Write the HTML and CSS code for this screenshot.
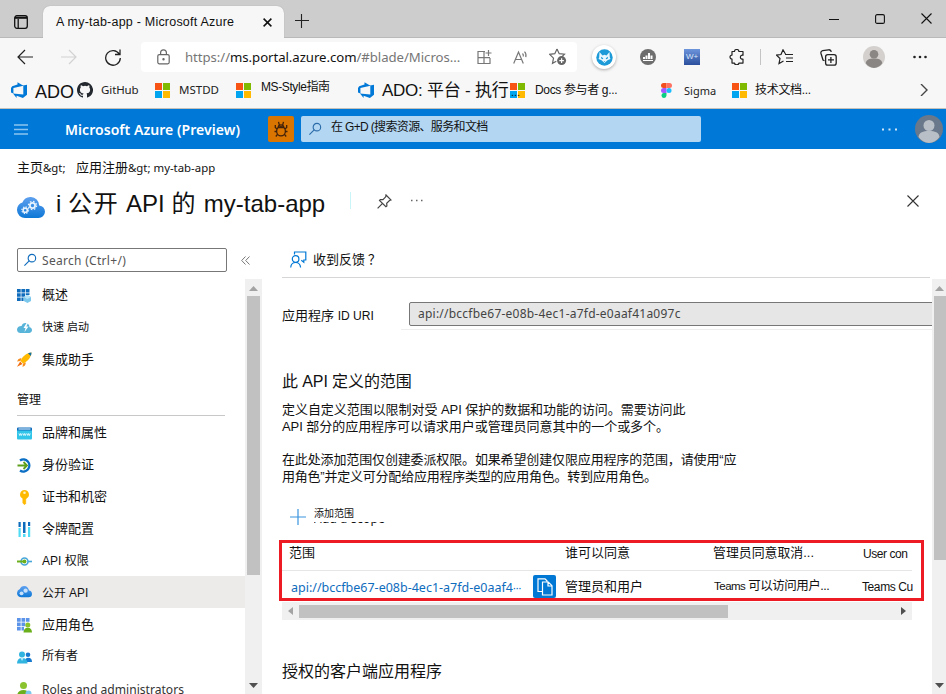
FILE: index.html
```html
<!DOCTYPE html>
<html lang="zh-CN">
<head>
<meta charset="utf-8">
<title>my-tab-app - Microsoft Azure</title>
<link rel="stylesheet" href="styles.css">
</head>
<body>
<svg class="defs" width="0" height="0" aria-hidden="true">
  <defs>
    <linearGradient id="cloudGrad" x1="0" y1="0" x2="0" y2="1"><stop offset="0" stop-color="#5ea0ef"/><stop offset="1" stop-color="#0d78d6"/></linearGradient>
    <symbol id="ms" viewBox="0 0 15 15"><path fill="#f65314" d="M0 0h7v7H0z"/><path fill="#7fba00" d="M8 0h7v7H8z"/><path fill="#00a4ef" d="M0 8h7v7H0z"/><path fill="#ffb900" d="M8 8h7v7H8z"/></symbol>
    <symbol id="ado" viewBox="0 0 16 16"><path fill="#0078d7" d="M16 2.8v10l-4.1 3.2-6.3-2.2V16L2 11.6l10.300.8V3.600zM12.400 3.700 6.500.2v2.400L1.200 4.200 0 5.900v4.500L2.400 11.400V6z"/></symbol>
    <symbol id="person" viewBox="0 0 28 28"><circle cx="14" cy="10.500" r="5.500"/><path d="M3.500 22C4 17.500 8 16 14 16s10 1.500 10.500 6A14 14 0 0 1 14 28 14 14 0 0 1 3.500 22z"/></symbol>
    <symbol id="cloud" viewBox="0 0 28 22"><path fill="url(#cloudGrad)" d="M28 14.800a6.700 6.700 0 0 0-5.800-6.400A8.400 8.400 0 0 0 13.600 0a8.600 8.600 0 0 0-8.200 5.600A7.900 7.900 0 0 0 0 13.300 8.100 8.100 0 0 0 8.400 21h13a6.500 6.500 0 0 0 6.600-6.200z"/></symbol>
    <symbol id="search" viewBox="0 0 16 16"><circle cx="9.500" cy="5.500" r="4" fill="none" stroke="currentColor" stroke-width="1.200"/><path d="M6.600 8.400 1.500 13.500" stroke="currentColor" stroke-width="1.200"/></symbol>
  </defs>
</svg>

<header class="browser">
  <div class="titlebar">
    <svg class="tabs-icon" width="14" height="14" viewBox="0 0 14 14" fill="none" stroke="#111" stroke-width="1.300"><rect x=".7" y=".7" width="12.600" height="12.600" rx="2.200"/><path d="M4.200 4v9" /><path d="M1 2.700h12" stroke-width="2.200"/></svg>
    <div class="tab">
      <span class="tab-title">A my-tab-app - Microsoft Azure</span>
      <svg width="9" height="9" viewBox="0 0 9 9" stroke="#111" stroke-width="1.500"><path d="m.6.6 7.800 7.800M8.400.6.6 8.400"/></svg>
    </div>
    <svg class="newtab" width="14" height="14" viewBox="0 0 14 14" stroke="#222" stroke-width="1.100"><path d="M0 6.500h14M6.500 0v14"/></svg>
    <svg class="win-min" width="10" height="10" viewBox="0 0 10 10" stroke="#111"><path d="M0 5.500h10"/></svg>
    <svg class="win-max" width="10" height="10" viewBox="0 0 10 10" fill="none" stroke="#111" stroke-width="1.100"><rect x=".6" y=".6" width="8.800" height="8.800" rx="1.500"/></svg>
    <svg class="win-close" width="11" height="11" viewBox="0 0 11 11" stroke="#111" stroke-width="1.100"><path d="m.5.5 10 10M10.500.5l-10 10"/></svg>
  </div>

  <div class="toolbar">
    <svg width="17" height="16" viewBox="0 0 17 16" fill="none" stroke="#222" stroke-width="1.200"><path d="M16 8H1M8 1 1 8l7 7"/></svg>
    <svg width="17" height="16" viewBox="0 0 17 16" fill="none" stroke="#d2d2d2" stroke-width="1.200"><path d="M0 8h15M8 1l7 7-7 7"/></svg>
    <svg width="16" height="17" viewBox="0 0 16 17" fill="none" stroke="#222" stroke-width="1.300"><path d="M14.300 5.200A7.300 7.300 0 1 0 15.300 9M15 .5v5h-5"/></svg>
    <div class="address">
      <svg class="lock" width="13" height="16" viewBox="0 0 13 16" fill="none" stroke="#666" stroke-width="1.200"><rect x=".8" y="5.600" width="11.400" height="9.200" rx="1.500"/><path d="M3.600 5.500V3.700a2.900 2.900 0 0 1 5.800 0v1.800"/><circle cx="6.500" cy="10.200" r=".6" fill="#666"/></svg>
      <span class="url">https://<b>ms.portal.azure.com</b>/#blade/Micros...</span>
      <svg width="15" height="15" viewBox="0 0 15 15" fill="none" stroke="#777" stroke-width="1.200"><path d="M8 1.500H1v12h12V8M1 7.700h12M7 1.500v12M11.500 0v6M8.500 3h6"/></svg>
      <svg width="16" height="15" viewBox="0 0 16 15" fill="none" stroke="#777" stroke-width="1.200"><path d="M.7 13.500 5.500 2l4.800 11.500M2.500 9.500h6M9.500 3.500c.8.800 1 1.800.8 3M11.500 1.700c1.500 1.500 1.800 3.400 1.300 5.500"/></svg>
      <svg width="18" height="18" viewBox="0 0 18 18"><path d="m8 1 2.200 4.700 5.300.5-3 3M8 1 5.800 5.700.7 6.300l3.800 3.800-1 5.200 3.800-2" fill="none" stroke="#666" stroke-width="1.200"/><circle cx="12.600" cy="12.600" r="4.500" fill="#666"/><path d="M10.300 12.600h4.600M12.600 10.300v4.600" stroke="#fff" stroke-width="1.200"/></svg>
    </div>
    <span class="fox"><svg width="17" height="17" viewBox="0 0 17 17"><circle cx="8.500" cy="8.500" r="8.200" fill="#1d9bd8"/><path fill="#e8f6fd" d="m3.500 3 3 3.400 2-.6 2 .6 3-3.400.3 5.500 .7 1.500-3 1.200-3 2.800-3-2.800-3-1.200.7-1.500z"/><path fill="#1d9bd8" d="m5 7.800 2.300 1.500-.6 1-1.500-.8zM12 7.800 9.700 9.300l.6 1 1.500-.8zM7.700 12h1.600l-.8.900z"/></svg></span>
    <svg class="badge-icon" width="16" height="16" viewBox="0 0 16 16"><circle cx="8" cy="8" r="8" fill="#6e6e6e"/><path fill="#fff" d="M3 8h2v2H3zM5.500 6.500h2V10h-2zM8 4h2v6H8zM10.500 6.500h2V10h-2zM3 11h10v1H3z"/></svg>
    <span class="wplus">W+</span>
    <svg width="16" height="16" viewBox="0 0 16 16" fill="none" stroke="#222" stroke-width="1.200" stroke-linejoin="round"><path d="M3 2.500h2.500a2.200 2 0 0 1 4.400 0H14v3.800a2 2 0 1 0 0 3.800v4H9.900a2.200 1.700 0 0 1-4.400 0H3v-4a2 2 0 1 1 0-4z"/></svg>
    <i class="sep"></i>
    <svg width="17" height="16" viewBox="0 0 17 16" fill="none" stroke="#222" stroke-width="1.200"><path d="M9.500 5 7 .8 5 5.500l-4.500.6L4 9.500l-1 5L7.500 12M9 5.500h8M10 9h7M10 12.500h7"/></svg>
    <svg width="17" height="17" viewBox="0 0 17 17" fill="none" stroke="#222" stroke-width="1.300"><rect x="5.600" y="5.600" width="10.600" height="10.600" rx="2.200"/><path d="M10.900 8v6M8 10.900h6M4.500 11.800 3 11 1 4.500C.6 3 1.200 2 2.700 1.600L8.500.8c1.500-.2 2.500.4 2.800 2"/></svg>
    <svg width="22" height="22" viewBox="0 0 28 28"><circle cx="14" cy="14" r="14" fill="#d3d0cd"/><use href="#person" fill="#8a8684"/></svg>
    <svg width="14" height="4" viewBox="0 0 14 4" fill="#222"><circle cx="1.500" cy="2" r="1.300"/><circle cx="7" cy="2" r="1.300"/><circle cx="12.500" cy="2" r="1.300"/></svg>
  </div>

  <nav class="favorites">
    <svg width="16" height="16"><use href="#ado"/></svg>
    <span class="f-ado">ADO</span>
    <svg width="16" height="16" viewBox="0 0 16 16" fill="#24292f"><path d="M8 0C3.580 0 0 3.580 0 8c0 3.540 2.290 6.530 5.470 7.590.4.070.55-.17.55-.38 0-.19-.01-.82-.01-1.490-2.010.37-2.530-.49-2.690-.94-.09-.23-.48-.94-.82-1.130-.28-.15-.68-.52-.01-.53.63-.01 1.080.58 1.230.82.720 1.210 1.870.87 2.330.66.070-.52.280-.87.510-1.070-1.780-.2-3.640-.89-3.640-3.950 0-.87.310-1.590.820-2.150-.08-.2-.36-1.020.08-2.120 0 0 .67-.21 2.200.82a7.400 7.400 0 0 1 4 0c1.530-1.040 2.200-.82 2.200-.82.440 1.100.160 1.920.080 2.120.510.560.820 1.270.820 2.150 0 3.070-1.870 3.750-3.650 3.950.290.250.540.730.540 1.480 0 1.070-.01 1.930-.01 2.200 0 .21.150.46.550.38A8 8 0 0 0 8 0z"/></svg>
    <span class="f-gh">GitHub</span>
    <svg width="15" height="15"><use href="#ms"/></svg>
    <span class="f-mst">MSTDD</span>
    <svg width="15" height="15"><use href="#ms"/></svg>
    <span class="f-style">MS-Style指南</span>
    <svg width="16" height="16"><use href="#ado"/></svg>
    <span class="f-plat">ADO: 平台 - 执行</span>
    <span class="f-logo"><svg width="15" height="15"><use href="#ms"/></svg><em>...</em></span>
    <span class="f-docs">Docs 参与者 g...</span>
    <svg width="11" height="15" viewBox="0 0 11 15"><path fill="#f24e1e" d="M5.500 0h-3a2.500 2.500 0 0 0 0 5h3z"/><path fill="#ff7262" d="M5.500 0h3a2.500 2.500 0 0 1 0 5h-3z"/><path fill="#a259ff" d="M5.500 5h-3a2.500 2.500 0 0 0 0 5h3z"/><circle cx="8" cy="7.500" r="2.500" fill="#1abcfe"/><path fill="#0acf83" d="M5.500 10h-3A2.500 2.500 0 1 0 5.500 12.500z"/></svg>
    <span class="f-sig">Sigma</span>
    <svg width="15" height="15"><use href="#ms"/></svg>
    <span class="f-tech">技术文档...</span>
    <svg width="8" height="12" viewBox="0 0 8 12" fill="none" stroke="#444" stroke-width="1.400"><path d="m1 0 6 6-6 6"/></svg>
  </nav>
</header>

<div class="azurebar">
  <svg width="14" height="11" viewBox="0 0 14 11" stroke="#8cc4f0" stroke-width="1.300"><path d="M0 1h14M0 5.500h14M0 10h14"/></svg>
  <strong>Microsoft Azure (Preview)</strong>
  <span class="bug"><svg width="14" height="16" viewBox="0 0 14 16" fill="none" stroke="#40210a" stroke-width="1.300"><ellipse cx="7" cy="10.200" rx="4.400" ry="4.600"/><path d="M4.200 6.500c0-3.600 5.600-3.600 5.600 0zM5.300 3.800 4.500.8M8.700 3.800l.8-3M3 8 1.300 6.500V4M11 8l1.700-1.500V4M2.600 10.500H.5M11.400 10.500h2.100M3.500 13.300 1.800 15.500M10.500 13.300l1.700 2.200"/></svg></span>
  <div class="gsearch"><svg width="15" height="15"><use href="#search"/></svg><span>在 G+D (搜索资源、服务和文档</span></div>
  <svg class="adots" width="15" height="3" viewBox="0 0 15 3" fill="#cfe6f8"><path d="M0 .5h2v2H0zM6.500.5h2v2h-2zM13 .5h2v2h-2z"/></svg>
  <svg class="auser" width="28" height="28" viewBox="0 0 28 28"><circle cx="14" cy="14" r="14" fill="#69788a"/><use href="#person" fill="#b9bfc6"/></svg>
</div>

<div class="crumbs"><span class="c1">主页<i>&amp;gt;</i></span><span class="c2">应用注册<i>&amp;gt; my-tab-app</i></span></div>

<div class="titlerow">
  <svg class="tcloud" width="28" height="22" viewBox="0 0 28 22"><use href="#cloud"/><g fill="none" stroke="#e6f2fd"><circle cx="15.500" cy="8.500" r="2.600" stroke-width="1.800"/><circle cx="15.500" cy="8.500" r="4.100" stroke-width="1.200" stroke-dasharray="1.600 1.620"/><circle cx="8.200" cy="13.200" r="2.100" stroke-width="1.600"/><circle cx="8.200" cy="13.200" r="3.400" stroke-width="1.100" stroke-dasharray="1.350 1.320"/></g></svg>
  <h1>i <span>公开</span> API <span>的</span> my-tab-app</h1>
  <i class="caret"></i>
  <svg class="pin" width="15" height="15" viewBox="0 0 15 15" fill="none" stroke="#444" stroke-width="1.200"><path d="m9 1 5 5-1.500.5-2.800 2.800.2 2.700-1 .8L2.500 6.500l.8-1 2.700.2 2.700-2.900zM5.300 9.700.6 14.400"/></svg>
  <svg class="dots" width="12" height="3" viewBox="0 0 12 3" fill="#666"><path d="M0 .8h1.500v1.500H0zM5 .8h1.500v1.500H5zM10 .8h1.500v1.500H10z"/></svg>
  <svg class="close" width="12" height="12" viewBox="0 0 12 12" stroke="#333" stroke-width="1.100"><path d="m.5.5 11 11M11.500.5l-11 11"/></svg>
</div>

<div class="body">
  <aside class="side">
    <div class="side-top">
      <div class="sbox"><svg width="15" height="15"><use href="#search"/></svg><span>Search (Ctrl+/)</span></div>
      <svg width="9" height="9" viewBox="0 0 9 9" fill="none" stroke="#777"><path d="M4.500.5.700 4.500l3.800 4M8.500.5l-3.800 4 3.800 4"/></svg>
    </div>
    <div class="side-scroll">
      <ul class="menu">
        <li><svg width="15" height="15" viewBox="0 0 15 15"><path fill="#0f6cbd" d="M0 1h3.700v3.500H0zM4.400 1h3.700v3.500H4.400zM8.800 1h3.700v3.500H8.800zM0 5.200h3.700v3.500H0zM4.400 5.200h3.700v3.500H4.400zM8.800 5.200h3.700V7H8.800zM0 9.400h3.700V13H0zM4.400 9.400h2.200V13H4.400z"/><path fill="#7cc7ec" d="m10.400 7 3.600 1.900v4L10.400 15l-3.600-2.100v-4z"/><path fill="#b9e3f7" d="m10.400 7 3.600 1.900-3.600 2-3.600-2z"/></svg><span>概述</span></li>
        <li class="quick"><svg width="15" height="15" viewBox="0 0 15 15"><path fill="#59b4d9" d="M12.500 7.300C12.500 4.700 10.800 3 8.500 3 6.500 3 5 4.200 4.600 6 1.800 5.900 0 7.600 0 9.700 0 11.700 1.500 13 3.500 13h8.600c1.700 0 2.900-1.200 2.900-2.900 0-1.500-1-2.600-2.500-2.800z"/><path fill="#fff" d="M9.500 3 6.500 8h2l-1 4 4-5.500H9.300L11 3z"/></svg><span>快速 启动</span></li>
        <li class="rocket"><svg width="15" height="15" viewBox="0 0 15 15"><path fill="#f78d1e" d="M4.500 6 1.500 7 0 9.500l3.500-.5zM9 10.500l-1 3L5.500 15l.5-3.500z"/><path fill="#ffb900" d="M14.500.5C10 .8 5.500 4 3.500 9L6 11.500c5-2 8.200-6.500 8.500-11z"/><path fill="#f26c0d" d="M3.200 9.500 0 14.800 5.500 12z"/><path fill="#1271a8" d="M11 1.300c1.200-.5 2.400-.8 3.500-.8 0 1.100-.3 2.300-.8 3.500z"/></svg><span>集成助手</span></li>
      </ul>
      <h2>管理</h2>
      <ul class="menu manage">
        <li><svg width="15" height="15" viewBox="0 0 15 15"><path fill="#32c5ea" d="M0 4h15v8.500a1 1 0 0 1-1 1H1a1 1 0 0 1-1-1z"/><path fill="#0f6cbd" d="M0 2.500a1 1 0 0 1 1-1h13a1 1 0 0 1 1 1v2H0z"/><path fill="#eaf8fd" d="M1.500 2.500h12v1h-12z"/><path fill="none" stroke="#e8fbff" stroke-width=".9" d="m2 7.500.8 2 .8-2 .8 2 .8-2M6 7.500l.8 2 .8-2 .8 2 .8-2M10 7.500l.8 2 .8-2 .8 2 .8-2"/></svg><span>品牌和属性</span></li>
        <li><svg width="15" height="15" viewBox="0 0 15 15" fill="none"><path stroke="#0b6fc5" stroke-width="2.400" d="M3 2.500a6 6 0 1 1 0 10"/><path stroke="#5ea01c" stroke-width="1.800" d="M.5 7.500H10M6.500 4 10 7.500 6.500 11"/></svg><span>身份验证</span></li>
        <li><svg width="15" height="15" viewBox="0 0 15 15"><path fill="#ffb900" d="M7.500 0a4.500 4.500 0 0 0-2 8.500V13l2 2 2-2-1-1 1-1-1-1 1-1v-.5a4.500 4.500 0 0 0-2-8.500z"/><circle cx="7.500" cy="2.700" r="1.300" fill="#fff2c4"/></svg><span>证书和机密</span></li>
        <li><svg width="15" height="15" viewBox="0 0 15 15"><path fill="#0f6cbd" d="M1.500 0h2.200v5H1.500zM6 0h2.500v11H6zM11 0h2.200v4H11z"/><path fill="#50dcf5" d="M1.500 6h2.200v9H1.500zM6 12h2.500v3H6zM11 5h2.200v10H11z"/></svg><span>令牌配置</span></li>
        <li><svg width="15" height="15" viewBox="0 0 15 15" fill="none"><circle cx="7.500" cy="7.500" r="3.500" stroke="#47a6da" stroke-width="1.600"/><path d="M11 7.500h4" stroke="#47a6da" stroke-width="1.600"/><path d="M0 7.500h8" stroke="#6bb01c" stroke-width="2"/><circle cx="7.500" cy="7.500" r="1.900" fill="#6bb01c"/></svg><span class="api">API 权限</span></li>
        <li class="on"><svg width="15" height="12" viewBox="0 0 28 22"><use href="#cloud"/><g fill="#c8e0fa"><circle cx="16" cy="8.500" r="4"/><circle cx="8.500" cy="13.500" r="3.600"/></g></svg><span class="api">公开 API</span></li>
        <li><svg width="15" height="15" viewBox="0 0 15 15"><path fill="#5c94ea" d="M0 0h3.700v3.700H0zM4.500 0h3.700v3.700H4.500zM9 0h3.500v3.700H9zM0 4.500h3.700v3.700H0zM4.500 4.500h3.700v3.700H4.500zM0 9h3.700v3.500H0zM4.500 9H7v3.500H4.500z"/><circle cx="10.800" cy="7" r="2.500" fill="#8ac32e"/><path fill="#6bb01c" d="M6.500 14.500c0-3 1.700-4.700 4.300-4.700s4.200 1.700 4.200 4.700z"/></svg><span>应用角色</span></li>
        <li><svg width="15" height="15" viewBox="0 0 15 15"><circle cx="11" cy="4.800" r="2.300" fill="#1779cf"/><path fill="#1779cf" d="M8 12c0-3 1-4.300 3.300-4.300S15 9 15 12z"/><circle cx="5" cy="4.500" r="3" fill="#32b4e0"/><path fill="#32b4e0" d="M0 13.500C0 10 1.700 8 5 8s5.500 2 5.500 5.500z"/><path fill="#b8ecfb" d="M3.500 8h3.200L5 11z"/></svg><span class="own">所有者</span></li>
        <li class="roles"><svg width="15" height="15" viewBox="0 0 15 15"><circle cx="6.500" cy="3.500" r="3.500" fill="#8ac32e"/><path fill="#6bb01c" d="M0 15c0-5 2.500-7 6.500-7s5.500 2 5.500 7z"/><circle cx="11.500" cy="11.500" r="3" fill="#7cc7ec"/></svg><span>Roles and administrators</span></li>
      </ul>
    </div>
  </aside>
  <div class="vbar side-bar"><svg width="9" height="5" viewBox="0 0 9 5" fill="#a3a3a3"><path d="M4.500 0 9 5H0z"/></svg><i></i><svg class="dn" width="9" height="5" viewBox="0 0 9 5" fill="#505050"><path d="M0 0h9L4.500 5z"/></svg></div>

  <main>
    <div class="feedback">
      <svg width="17" height="17" viewBox="0 0 17 17" fill="none" stroke="#0078d4" stroke-width="1.200"><path d="M4.500 3.500V1h11.300v8h-2v2.300L11.300 9.300"/><circle cx="5.600" cy="8" r="3.300"/><path d="M.7 16.500C1 13 3 11.500 5.600 11.500s4.600 1.500 5 5"/></svg>
      <span>收到反馈<i>？</i></span>
    </div>
    <div class="idrow"><label>应用程序 <span>ID URI</span></label><div class="idwrap"><div class="idbox">api://bccfbe67-e08b-4ec1-a7fd-e0aaf41a097c</div></div></div>
    <h3>此 API 定义的范围</h3>
    <p>定义自定义范围以限制对受 API 保护的数据和功能的访问。需要访问此<br>API 部分的应用程序可以请求用户或管理员同意其中的一个或多个。</p>
    <p class="p2"><span class="l1">在此处添加范围仅创建委派权限。如果希望创建仅限应用程序的范围，请使用“应</span><br><span class="l2">用角色”并定义可分配给应用程序类型的应用角色。转到应用角色。</span></p>
    <div class="add">
      <svg width="16" height="16" viewBox="0 0 16 16" stroke="#3b94de" stroke-width="1.200"><path d="M0 8h16M8 0v16"/></svg>
      <div><span>添加范围</span><div class="under"><b>Add a scope</b></div></div>
    </div>
    <div class="scopes">
      <div class="tr th"><span class="sc">范围</span><span class="who">谁可以同意</span><span class="adm">管理员同意取消...</span><span class="usr u1">User con</span></div>
      <div class="tr td"><span class="sc link">api://bccfbe67-e08b-4ec1-a7fd-e0aaf4<small>···</small></span>
        <span class="copy"><svg width="16" height="18" viewBox="0 0 16 18" fill="#0078d4" stroke="#fff" stroke-width="1.200"><path d="M1 .8h7l2 2v10.700H1z"/><path d="M5.500 4h5.800l3.700 3.700V17H5.500zM11 4v4h4"/></svg></span>
        <span class="who">管理员和用户</span><span class="adm"><b>Teams</b> 可以访问用户...</span><span class="usr u2">Teams Cu</span></div>
    </div>
    <div class="hbar"><svg width="5" height="8" viewBox="0 0 5 8" fill="#a3a3a3"><path d="M5 0v8L0 4z"/></svg><i></i><svg class="rt" width="5" height="8" viewBox="0 0 5 8" fill="#505050"><path d="M0 0v8l5-4z"/></svg></div>
    <h3 class="last">授权的客户端应用程序</h3>
  </main>
  <div class="vbar page-bar"><svg width="9" height="5" viewBox="0 0 9 5" fill="#a3a3a3"><path d="M4.500 0 9 5H0z"/></svg><i></i><svg class="dn" width="9" height="5" viewBox="0 0 9 5" fill="#505050"><path d="M0 0h9L4.500 5z"/></svg></div>
</div>
</body>
</html>
```
FILE: styles.css
```css
* { box-sizing: border-box; margin: 0; padding: 0; }
body { width: 946px; height: 694px; overflow: hidden; background: #fff; color: #111; font: 13px/17px "Liberation Sans", "Noto Sans CJK SC", sans-serif; white-space: nowrap; }
svg { display: block; flex: none; }
.defs { position: absolute; }
i, em { font-style: normal; }
b { font-weight: normal; }

.titlebar { height: 38px; background: #cdcdcd; border-bottom: 1px solid #b9b9b9; display: flex; align-items: center; }
.tabs-icon { margin: 7px 15px 0 14px; }
.tab { width: 241px; height: 32px; align-self: flex-start; margin-top: 6px; background: #f7f7f7; border-radius: 7px 7px 0 0; display: flex; align-items: center; justify-content: space-between; padding: 0 12px 0 13px; box-shadow: 0 0 1px #999; clip-path: inset(-2px -2px 0 -2px); }
.tab-title { font-size: 12.500px; letter-spacing: .22px; }
.newtab { margin: 5px 0 0 11px; }
.win-min { margin-left: 520px; }
.win-max { margin-left: 36px; }
.win-close { margin-left: 36px; }

.toolbar { height: 40px; background: #f7f7f7; display: grid; align-items: center; grid-template-columns: 44px 44px 36px 451px 48px 44px 45px 31px 16px 44px 43px 50px 14px; padding: 0 0 2px 17px; }
.address { width: 436px; height: 30px; background: #fff; border-radius: 4px; display: grid; grid-template-columns: 28px 292px 36px 36px 18px; align-items: center; padding-left: 16px; }
.url { font: 13.200px "Noto Sans", sans-serif; letter-spacing: -.05px; color: #767676; }
.url b { color: #111; }
.fox { width: 24px; height: 24px; border-radius: 50%; background: #fff; box-shadow: 0 1px 3px #aaa; display: grid; place-items: center; }
.wplus { width: 16px; height: 16px; background: linear-gradient(#6d95dc, #2b4f9c); color: #dbe6fa; font-size: 8px; line-height: 16px; text-align: center; }
.sep { width: 1px; height: 16px; background: #c4c4c4; }

.favorites { height: 31px; background: #f7f7f7; border-bottom: 1px solid #c4c0ba; display: grid; align-items: center; grid-template-columns: 24px 42px 24px 54px 24px 57px 25px 97px 24px 128px 25px 126px 23px 48px 23px 165px 8px; padding: 0 0 6px 11px; }
.f-ado { font-size: 18px; padding-top: 5px; }
.f-gh, .f-mst, .f-sig { font: 11.500px "Noto Sans", sans-serif; color: #222; }
.f-gh { letter-spacing: -.1px; padding-bottom: 2px; }
.f-mst { padding-bottom: 2px; }
.f-sig { font-size: 11px; }
.f-style { font-size: 12px; letter-spacing: -.4px; padding-bottom: 5px; }
.f-plat { font-size: 17px; letter-spacing: -.25px; }
.f-logo { position: relative; }
.f-logo em { position: absolute; left: 1px; top: 3px; font-size: 11px; line-height: 12px; }
.f-docs { font-size: 12px; letter-spacing: -.35px; }
.f-tech { font-size: 12px; letter-spacing: -.3px; }

.azurebar { height: 40px; background: #0078d7; display: flex; align-items: center; padding-left: 14px; }
.azurebar strong { margin-left: 37px; width: 203px; color: #fff; font: 600 14px "Noto Sans", sans-serif; letter-spacing: .05px; }
.bug { width: 26px; height: 26px; border-radius: 2px; background: #da7500; display: grid; place-items: center; }
.gsearch { margin-left: 7px; width: 400px; height: 26px; border-radius: 2px; background: #b3d6f3; display: flex; align-items: center; gap: 8px; padding-left: 7px; color: #2b6ca8; }
.gsearch span { color: #111; font-size: 12px; letter-spacing: -.65px; padding-bottom: 3px; }
.adots { margin-left: 181px; }
.auser { margin-left: 18px; }

.crumbs { height: 38px; display: flex; padding: 10px 0 0 17px; }
.crumbs i { font: 11.400px "Noto Sans", sans-serif; }
.c1 { width: 59px; }

.titlerow { height: 61px; display: flex; align-items: flex-start; padding-left: 17px; }
.tcloud { margin-top: 10px; }
h1 { margin-left: 11px; width: 294px; font: 24px/34px "Liberation Sans", "Noto Sans CJK SC", sans-serif; }
h1 span { letter-spacing: 1.700px; }
.caret { width: 1px; height: 17px; margin-top: 5px; background: #c9f5f8; }
.pin { margin: 7px 0 0 26px; }
.dots { margin: 12px 0 0 19px; }
.close { margin: 8px 0 0 484px; }

.body { height: 446px; display: flex; }
.side { width: 245px; }
.side-top { height: 31px; display: flex; align-items: center; gap: 14px; padding-left: 17px; padding-bottom: 7px; width: 262px; }
.sbox { width: 210px; height: 24px; border: 1px solid #777; border-radius: 2px; display: flex; align-items: center; gap: 4px; padding-left: 5px; color: #0f6cbd; }
.sbox span { font: 12px "Noto Sans", sans-serif; letter-spacing: .3px; color: #555; }
.side-scroll { height: 415px; overflow: hidden; }
.menu { list-style: none; }
.menu li { height: 32px; display: flex; align-items: center; gap: 10px; padding-left: 17px; }
.menu li span { padding-bottom: 1px; }
.menu .quick span { font-size: 11px; padding: 1px 0 0; }
.menu .rocket span { padding: 1px 0 0; }
.menu .api { font-size: 12px; padding: 0; }
.menu .on .api { font-size: 11.900px; padding-top: 3px; }
.own { font-size: 12px; }
h2 { margin: 12px 20px 0 17px; height: 29px; border-bottom: 1px solid #c8c8c8; font: 12px/26px "Liberation Sans", "Noto Sans CJK SC", sans-serif; }
.manage { padding-top: 1px; }
.menu .on { background: #edebe9; margin-top: -1px; }
.on + li { margin-top: 1px; }
.menu .roles span { font: 12.100px "Noto Sans", sans-serif; color: #333; padding: 1px 0 0; }

.vbar { margin-top: 31px; height: 415px; background: #f0f0f0; display: flex; flex-direction: column; align-items: center; padding: 7px 0 6px; }
.vbar i { background: #c1c1c1; margin-top: 5px; }
.dn { margin-top: auto; }
.side-bar { width: 17px; }
.side-bar i { width: 13px; height: 279px; }
.page-bar { width: 14px; }
.page-bar i { width: 12px; height: 264px; align-self: flex-end; }

main { width: 670px; padding-left: 20px; overflow: hidden; }
.feedback { width: 648px; height: 30px; border-bottom: 1px solid #d6d6d6; display: flex; align-items: center; gap: 6px; padding: 0 0 7px 8px; }
.feedback i { margin-left: 3px; }
.idrow { height: 52px; display: flex; }
.idrow label { width: 119px; padding-top: 29px; }
.idrow label span { font-size: 12.100px; }
.idwrap { width: 531px; border-bottom: 1px solid #eee; padding: 24px 0 0 8px; }
.idbox { width: 530px; height: 24px; border: 1px solid #777; border-radius: 2px; background: #e6e6e6; font: 12px/22px "Noto Sans", sans-serif; letter-spacing: .23px; color: #444; padding-left: 8px; }
h3 { font: 16px/24px "Liberation Sans", "Noto Sans CJK SC", sans-serif; }
main > h3:not(.last) { margin-top: 40px; height: 31px; letter-spacing: -.1px; }
p { height: 50px; letter-spacing: -.05px; }
.l1 { letter-spacing: -.14px; }
.l2 { letter-spacing: -.22px; }
.add { height: 39px; padding: 6px 0 0 8px; display: flex; gap: 8px; }
.add > svg { margin-top: 2px; }
.add span { display: block; font-size: 10px; line-height: 12px; height: 15px; padding-top: 1px; }
.under { height: 4px; overflow: hidden; display: flex; align-items: flex-end; }
.under b { font: 12px/14px "Noto Sans", sans-serif; letter-spacing: .25px; }
.scopes { width: 645px; height: 61px; margin-left: -3px; border: 3px solid #ed1c24; }
.tr { display: grid; grid-template-columns: 276px 148px 150px 1fr; width: 630px; }
.th { height: 28px; border-bottom: 1px solid #e6e6e6; padding-left: 7px; line-height: 19px; }
.td { height: 27px; grid-template-columns: 242px 32px 149px 148px 1fr; padding-left: 9px; align-items: center; }
.link { font: 12.500px "Noto Sans", sans-serif; color: #0f6cbd; padding-top: 5px; }
.adm { font-size: 12.900px; }
.td .adm { font-size: 12.500px; letter-spacing: -.5px; }
.td .adm b { font-size: 11.500px; letter-spacing: -.5px; }
.copy { width: 23px; height: 23px; margin-top: 4px; background: #0078d4; border-radius: 2px; display: grid; place-items: center; }
.td .who, .td .adm { padding-top: 3px; }
.usr { font-size: 12px; letter-spacing: -.45px; }
.u1 { padding-top: 2px; }
.u2 { padding-top: 6px; letter-spacing: -.4px; }
.hbar { width: 630px; height: 18px; margin-top: 1px; background: #f0f0f0; display: flex; align-items: center; padding: 0 6px; }
.hbar i { width: 429px; height: 13px; background: #c1c1c1; margin-left: 6px; }
.rt { margin-left: auto; }
.last { margin-top: 40px; }
```
